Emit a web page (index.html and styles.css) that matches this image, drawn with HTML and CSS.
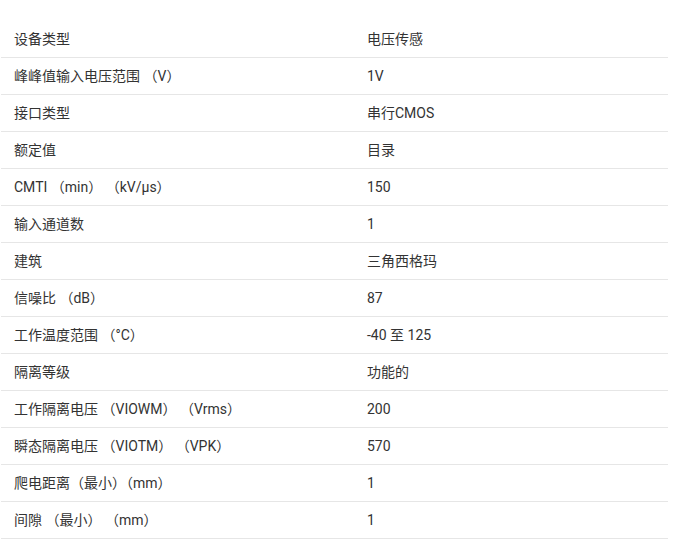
FILE: index.html
```html
<!DOCTYPE html>
<html lang="zh-CN">
<head>
<meta charset="utf-8">
<link rel="stylesheet" href="styles.css">
</head>
<body>
<table class="spec">
  <tbody>
    <tr><td class="k">设备类型</td><td class="v">电压传感</td></tr>
    <tr><td class="k">峰峰值输入电压范围 （V）</td><td class="v">1V</td></tr>
    <tr><td class="k">接口类型</td><td class="v">串行CMOS</td></tr>
    <tr><td class="k">额定值</td><td class="v">目录</td></tr>
    <tr><td class="k">CMTI （min） （kV/μs）</td><td class="v">150</td></tr>
    <tr><td class="k">输入通道数</td><td class="v">1</td></tr>
    <tr><td class="k">建筑</td><td class="v">三角西格玛</td></tr>
    <tr><td class="k">信噪比 （dB）</td><td class="v">87</td></tr>
    <tr><td class="k">工作温度范围 （°C）</td><td class="v">-40 至 125</td></tr>
    <tr><td class="k">隔离等级</td><td class="v">功能的</td></tr>
    <tr><td class="k">工作隔离电压 （VIOWM） （Vrms）</td><td class="v">200</td></tr>
    <tr><td class="k">瞬态隔离电压 （VIOTM） （VPK）</td><td class="v">570</td></tr>
    <tr><td class="k">爬电距离（最小）（mm）</td><td class="v">1</td></tr>
    <tr><td class="k">间隙 （最小） （mm）</td><td class="v">1</td></tr>
  </tbody>
</table>
</body>
</html>
```
FILE: styles.css
```css
html, body {
  margin: 0;
  padding: 0;
  background: #fff;
}
body {
  padding: 21px 0 0 1px;
  font-family: Roboto, "Noto Sans CJK SC", sans-serif;
  font-size: 14px;
  color: #333;
}
.spec {
  width: 667px;
  border-collapse: collapse;
  table-layout: fixed;
}
.spec td {
  height: 36px;
  padding: 0 0 0 13px;
  border-bottom: 1px solid #e6e6e6;
  vertical-align: middle;
  white-space: nowrap;
  line-height: 20px;
}
.spec .k {
  width: 340px;
}
```
